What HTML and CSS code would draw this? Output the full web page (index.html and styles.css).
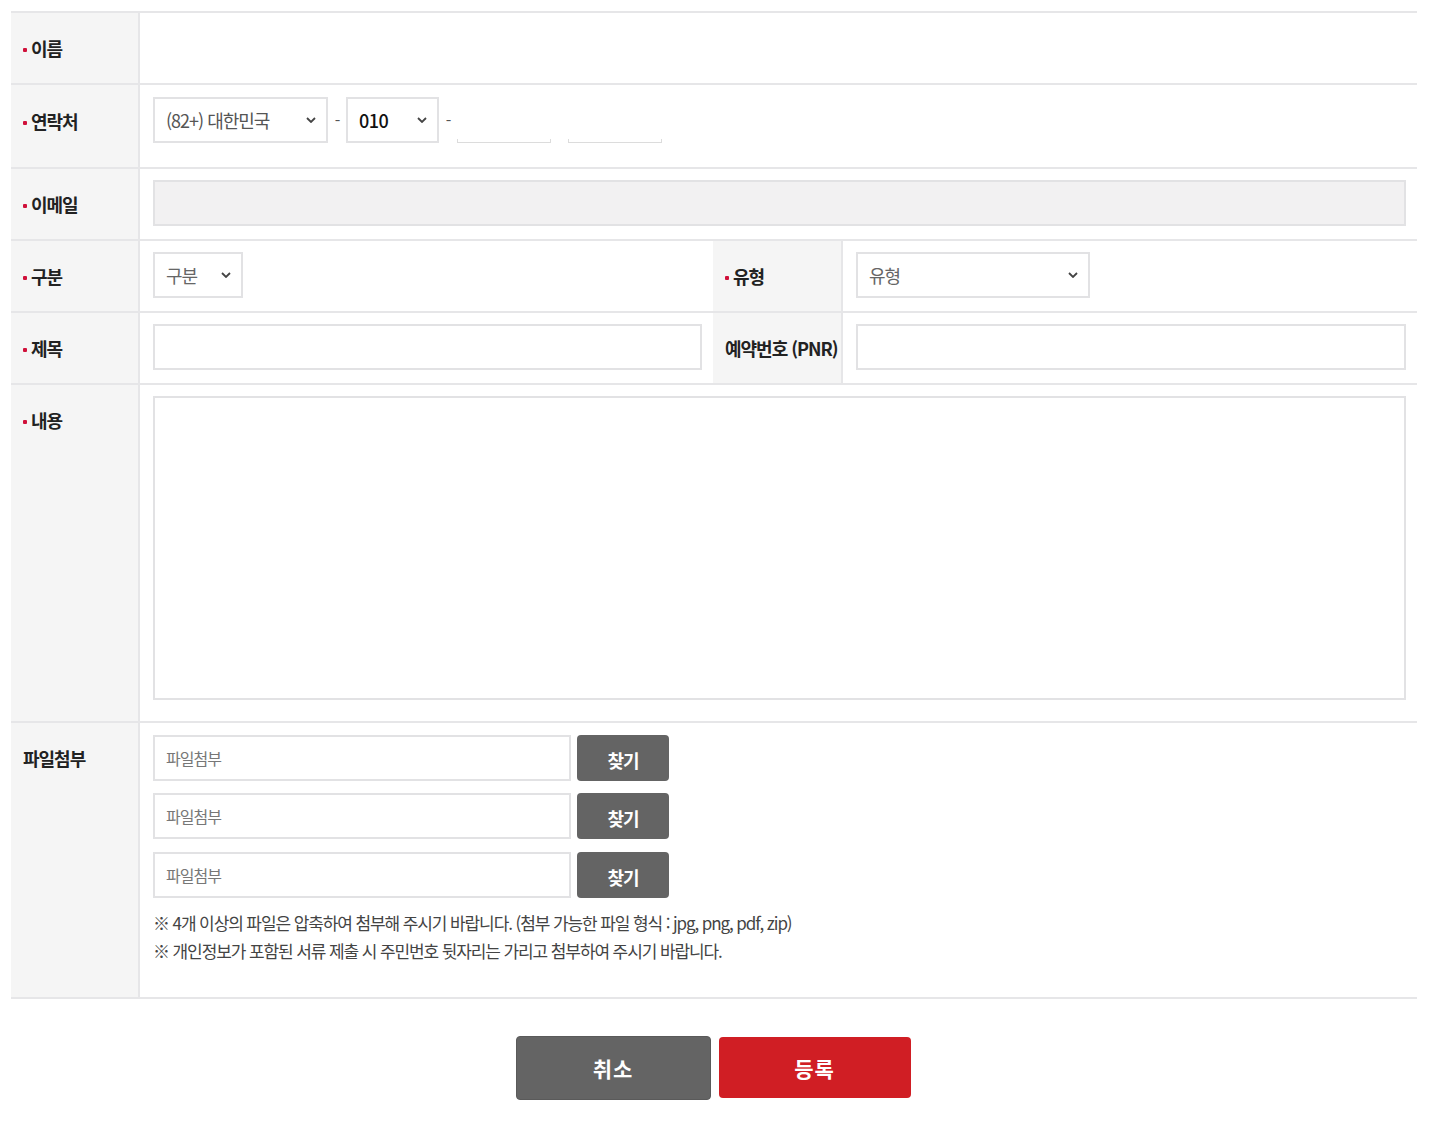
FILE: index.html
```html
<!DOCTYPE html>
<html lang="ko">
<head>
<meta charset="utf-8">
<title>문의 등록</title>
<link rel="stylesheet" href="styles.css">
</head>
<body>
<div class="page">
  <div class="form">
    <div class="row r-name">
      <div class="th req">이름</div>
      <div class="td"></div>
    </div>
    <div class="row r-phone">
      <div class="th req">연락처</div>
      <div class="td">
        <div class="phone">
          <div class="select s-country"><span>(82+) 대한민국</span><svg class="chev" viewBox="0 0 10 6"><path d="M1 1l4 4 4-4"/></svg></div>
          <span class="dash">-</span>
          <div class="select s-pre"><span>010</span><svg class="chev" viewBox="0 0 10 6"><path d="M1 1l4 4 4-4"/></svg></div>
          <span class="dash">-</span>
          <div class="mini"></div>
          <div class="mini"></div>
        </div>
      </div>
    </div>
    <div class="row">
      <div class="th req">이메일</div>
      <div class="td"><div class="input disabled"></div></div>
    </div>
    <div class="row">
      <div class="th req">구분</div>
      <div class="td half">
        <div class="select s-type"><span>구분</span><svg class="chev" viewBox="0 0 10 6"><path d="M1 1l4 4 4-4"/></svg></div>
      </div>
      <div class="th req">유형</div>
      <div class="td half2">
        <div class="select s-kind"><span>유형</span><svg class="chev" viewBox="0 0 10 6"><path d="M1 1l4 4 4-4"/></svg></div>
      </div>
    </div>
    <div class="row">
      <div class="th req">제목</div>
      <div class="td half"><div class="input"></div></div>
      <div class="th">예약번호 (PNR)</div>
      <div class="td half2"><div class="input"></div></div>
    </div>
    <div class="row r-content">
      <div class="th req">내용</div>
      <div class="td"><div class="textarea"></div></div>
    </div>
    <div class="row r-file">
      <div class="th">파일첨부</div>
      <div class="td">
        <div class="file"><div class="input fname">파일첨부</div><button class="find">찾기</button></div>
        <div class="file"><div class="input fname">파일첨부</div><button class="find">찾기</button></div>
        <div class="file"><div class="input fname">파일첨부</div><button class="find">찾기</button></div>
        <p class="note">※ 4개 이상의 파일은 압축하여 첨부해 주시기 바랍니다. (첨부 가능한 파일 형식 : jpg, png, pdf, zip)</p>
        <p class="note">※ 개인정보가 포함된 서류 제출 시 주민번호 뒷자리는 가리고 첨부하여 주시기 바랍니다.</p>
      </div>
    </div>
  </div>
  <div class="actions">
    <button class="btn cancel">취소</button>
    <button class="btn submit">등록</button>
  </div>
</div>
</body>
</html>
```

FILE: styles.css
```css
* { box-sizing: border-box; }
html, body { margin: 0; padding: 0; background: #fff; }
body {
  font-family: "Noto Sans CJK KR", "Noto Sans", sans-serif;
  color: #333;
  letter-spacing: -1px;
}
.page { padding: 11px 13px 0 11px; }
.form { border-top: 2px solid #e6e6e8; }
.row {
  display: flex;
  border-bottom: 2px solid #e6e6e8;
  min-height: 72px;
}
.th {
  width: 129px;
  flex: none;
  background: #f5f5f5;
  border-right: 2px solid #e6e6e8;
  padding: 23px 0 0 12px;
  font-size: 18px;
  font-weight: 700;
  line-height: 24px;
  color: #222;
  white-space: nowrap;
}
.th.req::before {
  content: "";
  display: inline-block;
  width: 4px;
  height: 4px;
  background: #d0103a;
  border-radius: 1px;
  margin: 0 4px 3px 0;
  vertical-align: middle;
}
.td {
  flex: 1;
  padding: 11px 11px 13px 13px;
}
.td.half { flex: none; width: 573px; }
.td.half2 { flex: 1; }
.td.half + .th { padding-left: 12px; width: 130px; }

.input, .select, .textarea {
  height: 46px;
  border: 2px solid #e2e2e4;
  background: #fff;
}
.input.disabled { background: #f2f1f2; }
.select {
  display: flex;
  align-items: center;
  justify-content: space-between;
  padding: 0 10px 0 11px;
  font-size: 18px;
  color: #555;
}
.chev { width: 10px; height: 6px; fill: none; stroke: #444; stroke-width: 1.8; }
.phone { display: flex; align-items: flex-start; height: 46px; }
.s-country { width: 175px; padding-right: 10px; }
.s-pre { width: 93px; color: #111; font-weight: 500; }
.s-pre span { letter-spacing: -0.5px; }
.dash { width: 18px; text-align: center; font-size: 16px; line-height: 46px; color: #555; }
.mini {
  width: 94px;
  height: 4px;
  margin-top: 42px;
  border: 1.5px solid #dcdcdc;
  border-top: 0;
  margin-right: 17px;
}
.r-phone { min-height: 84px; }
.r-phone .td { padding-top: 12px; }
.r-phone .th { padding-top: 24px; }
.s-type { width: 90px; color: #666; }
.s-kind { width: 234px; color: #666; }
.textarea { height: 304px; }
.r-content .td { padding-bottom: 21px; }
.r-content .th { padding-top: 23px; }
.r-file .td { padding-top: 12px; padding-bottom: 32px; }
.file { display: flex; gap: 6px; margin-bottom: 12px; height: 46px; }
.file:nth-child(2) { margin-bottom: 13px; }
.fname {
  width: 418px;
  font-size: 16px;
  color: #777;
  line-height: 42px;
  padding-left: 11px;
}
.find {
  width: 92px;
  height: 46px;
  border: 0;
  border-radius: 4px;
  background: #646464;
  color: #fff;
  font-family: inherit;
  font-size: 18px;
  font-weight: 700;
  letter-spacing: -1px;
  padding-top: 4px;
}
.note {
  margin: 0;
  font-size: 17px;
  line-height: 28px;
  color: #444;
  letter-spacing: -1.1px;
}
.file:last-of-type { margin-bottom: 11px; }
.actions {
  display: flex;
  justify-content: center;
  gap: 8px;
  padding: 37px 0 0 0;
  margin-left: -2px;
}
.btn {
  width: 195px;
  height: 64px;
  border-radius: 4px;
  font-family: inherit;
  font-size: 21px;
  font-weight: 700;
  color: #fff;
  letter-spacing: 1px;
}
.cancel { background: #646464; border: 1px solid #5a5a5a; }
.submit { width: 192px; height: 61px; margin-top: 1px; background: #d01e24; border: 0; }
```
